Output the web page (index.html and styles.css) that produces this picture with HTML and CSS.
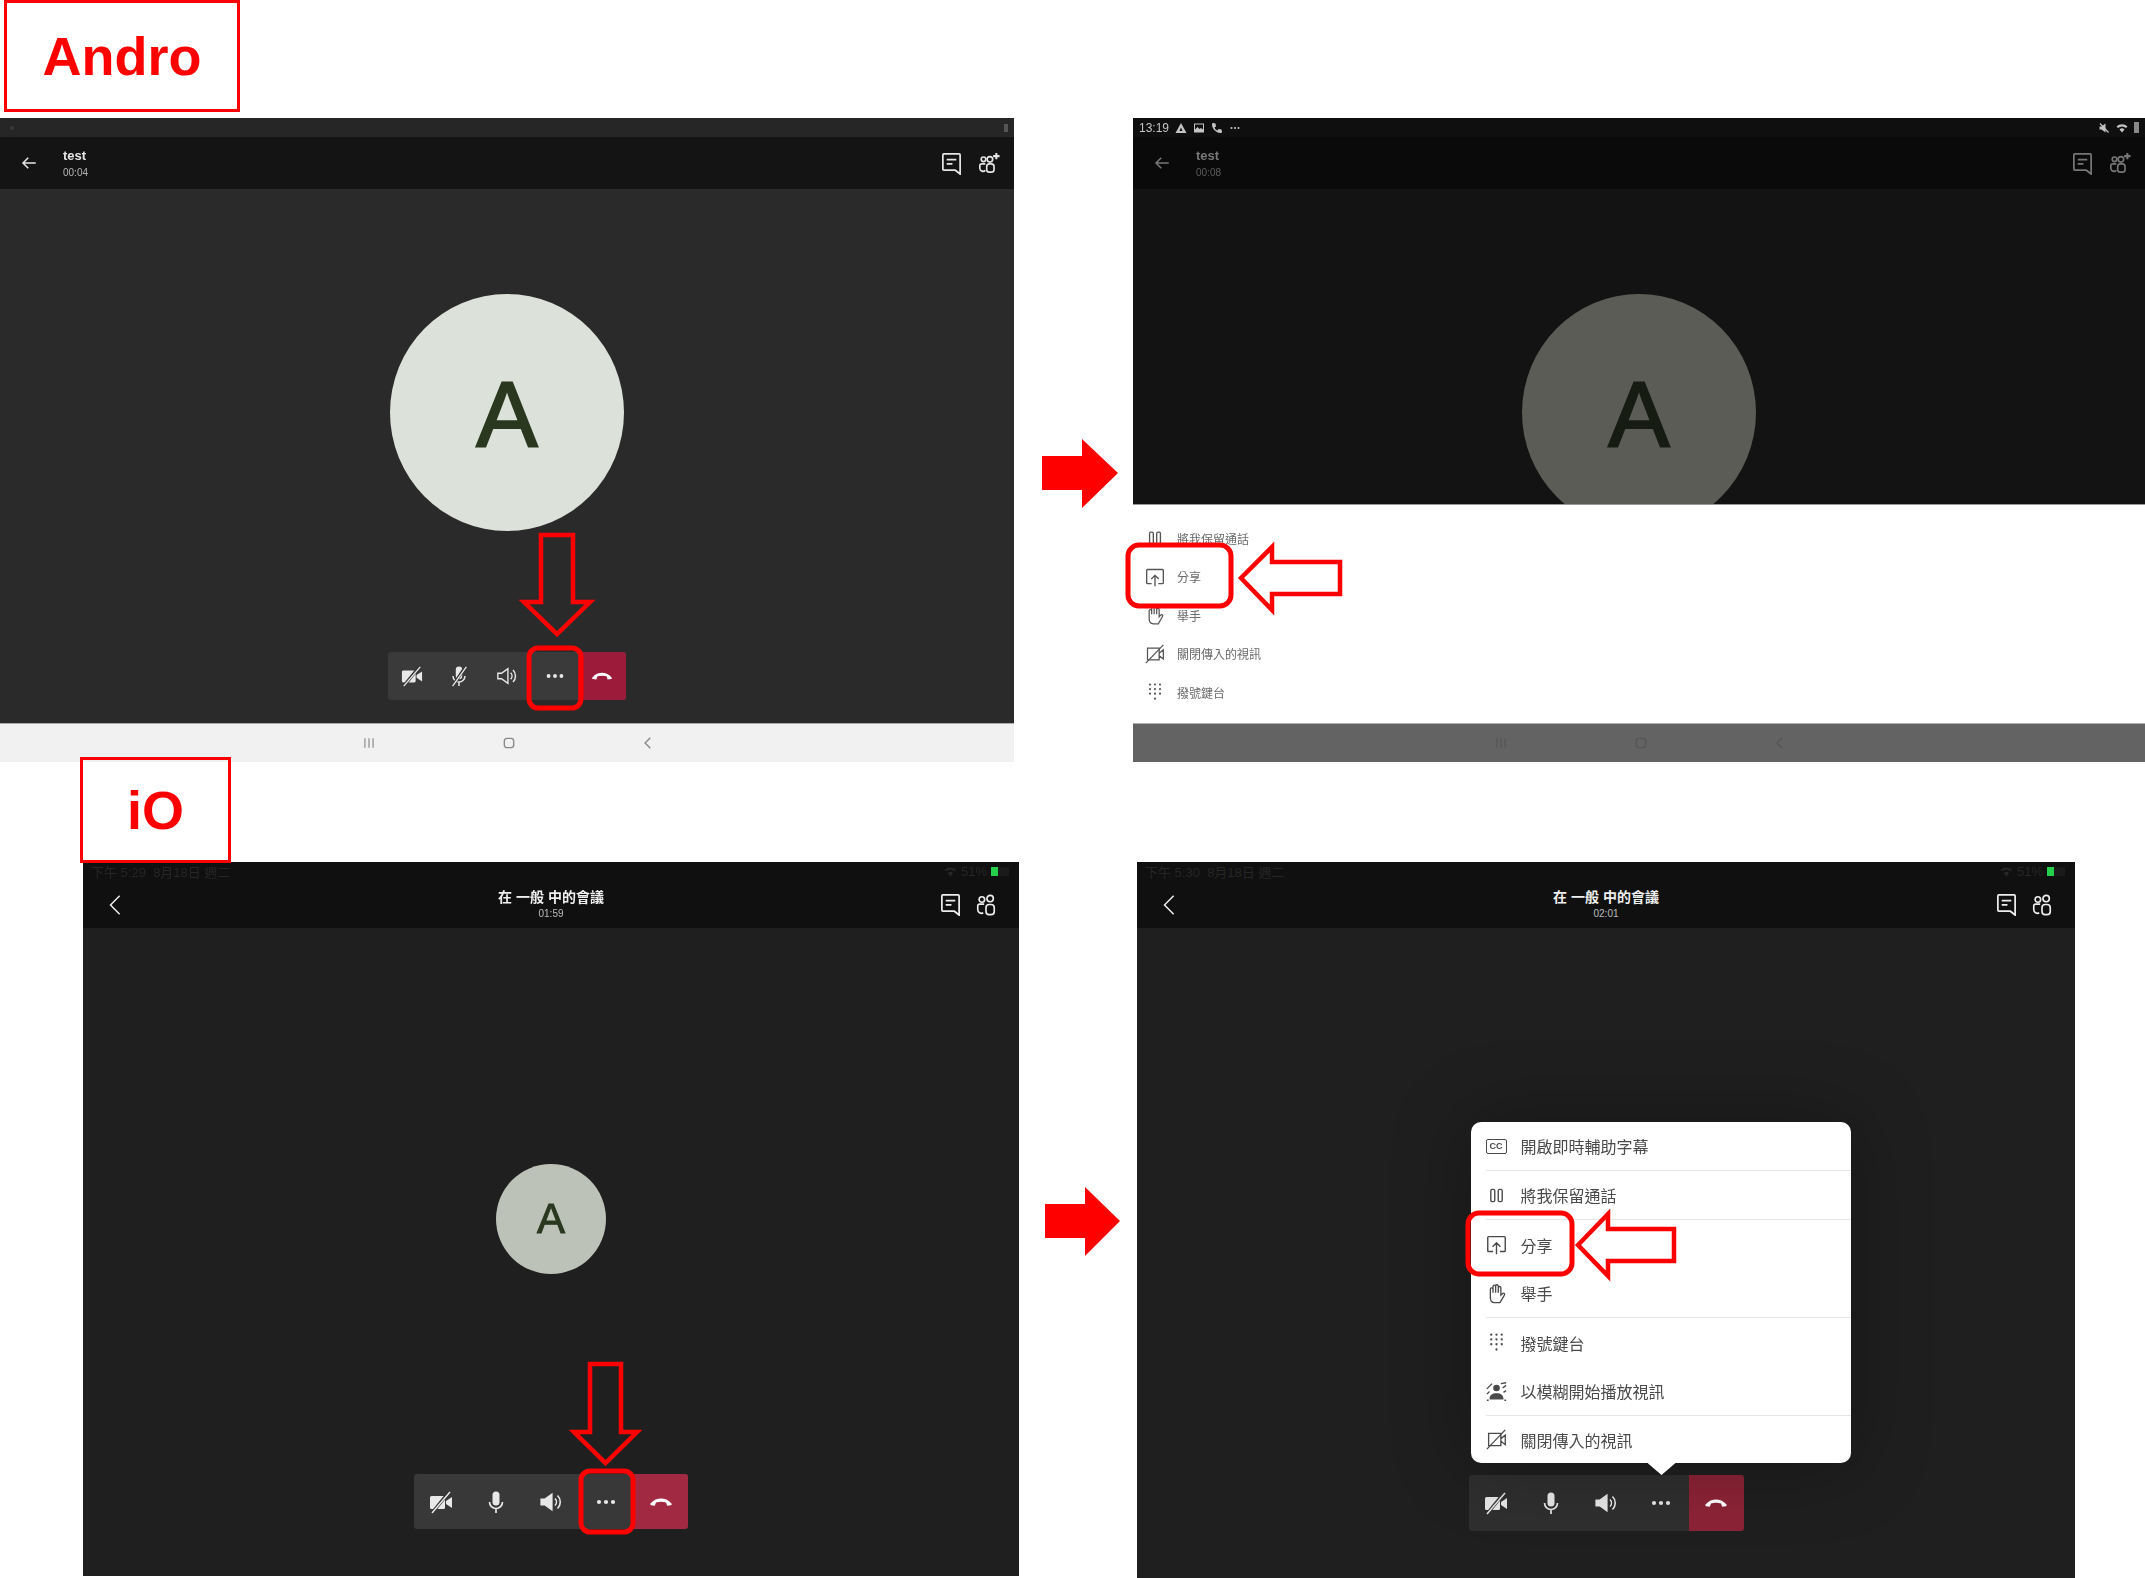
FILE: index.html
```html
<!DOCTYPE html>
<html lang="zh-Hant">
<head>
    <meta charset="UTF-8">
    <title>Teams share steps</title>
    <link rel="stylesheet" href="styles.css">
</head>
<body>

<svg class="defs" width="0" height="0">
    <symbol id="arrow-back" viewBox="0 0 24 24"><path d="M21 12H4M11 5l-7 7 7 7" fill="none" stroke="currentColor" stroke-width="2"/></symbol>
    <symbol id="chevron" viewBox="0 0 24 24"><path d="M16 2L6 12l10 10" fill="none" stroke="currentColor" stroke-width="1.6"/></symbol>
    <symbol id="chat" viewBox="0 0 24 24"><path d="M4 2h16a1 1 0 0 1 1 1v20l-5-4H4a1 1 0 0 1-1-1V3a1 1 0 0 1 1-1z" fill="none" stroke="currentColor" stroke-width="1.8"/><path d="M7 8h10M7 12.500h6" stroke="currentColor" stroke-width="1.8"/></symbol>
    <symbol id="people" viewBox="0 0 24 24"><g fill="none" stroke="currentColor" stroke-width="1.8"><circle cx="7.500" cy="6" r="3"/><circle cx="16.500" cy="5" r="3.500"/><rect x="12" y="11.500" width="9" height="11" rx="3.500"/><path d="M10 11H5a2 2 0 0 0-2 2v4a4 4 0 0 0 6 3.500"/></g></symbol>
    <symbol id="people-add" viewBox="0 0 24 24"><g fill="none" stroke="currentColor" stroke-width="1.8"><circle cx="6" cy="8" r="2.500"/><circle cx="13" cy="8" r="3"/><rect x="9.500" y="13" width="8" height="9" rx="3"/><path d="M8 13H4a2 2 0 0 0-2 2v3a3.500 3.500 0 0 0 6 2"/><path d="M20 1v7M16.500 4.500h7" stroke-width="2.200"/></g></symbol>
    <symbol id="video-off" viewBox="0 0 24 24"><rect x="1" y="6" width="15" height="13" rx="1.500" fill="currentColor"/><path d="M17 11l6-4v11l-6-4z" fill="currentColor"/><path d="M20 2L3 23" stroke="var(--cut)" stroke-width="3.400"/><path d="M21 2L3 23" stroke="currentColor" stroke-width="1.500"/></symbol>
    <symbol id="mic" viewBox="0 0 24 24"><rect x="8.500" y="1.500" width="7" height="14" rx="3.500" fill="currentColor"/><path d="M5.500 12a6.500 6.500 0 0 0 13 0M12 18.500V23" fill="none" stroke="currentColor" stroke-width="1.700"/></symbol>
    <symbol id="mic-off" viewBox="0 0 24 24"><rect x="8.500" y="1.500" width="7" height="14" rx="3.500" fill="currentColor"/><path d="M5.500 12a6.500 6.500 0 0 0 13 0M12 18.500V23" fill="none" stroke="currentColor" stroke-width="1.600"/><path d="M19 2L5 23" stroke="var(--cut)" stroke-width="3.400"/><path d="M20 2L5 23" stroke="currentColor" stroke-width="1.500"/></symbol>
    <symbol id="speaker" viewBox="0 0 24 24"><path d="M2 9h4l7-5v16l-7-5H2z" fill="currentColor" stroke="currentColor" stroke-width="1.200"/><path d="M16 8.500a5 5 0 0 1 0 7M18.500 5.500a9 9 0 0 1 0 13" fill="none" stroke="currentColor" stroke-width="1.600"/></symbol>
    <symbol id="speaker-line" viewBox="0 0 24 24"><path d="M2 9h4l7-5v16l-7-5H2z" fill="none" stroke="currentColor" stroke-width="1.500"/><path d="M16 8.500a5 5 0 0 1 0 7M18.500 5.500a9 9 0 0 1 0 13" fill="none" stroke="currentColor" stroke-width="1.600"/></symbol>
    <symbol id="dots" viewBox="0 0 24 24"><circle cx="5" cy="12" r="2.100" fill="currentColor"/><circle cx="12" cy="12" r="2.100" fill="currentColor"/><circle cx="19" cy="12" r="2.100" fill="currentColor"/></symbol>
    <symbol id="hangup" viewBox="0 0 24 24"><path d="M1.500 13.500C4.500 9.800 8.500 8.500 12 8.500s7.500 1.300 10.500 5c.5.700.1 1.700-.7 1.800l-3.600.5-1.200-3.400c-1.500-.5-3.400-.7-5-.7s-3.500.2-5 .7L5.800 15.800l-3.600-.5c-.8-.1-1.200-1.100-.7-1.800z" fill="currentColor"/></symbol>
    <symbol id="pause" viewBox="0 0 24 24"><g fill="none" stroke="currentColor" stroke-width="1.600"><rect x="5.500" y="5" width="4.500" height="14" rx="1.500"/><rect x="14" y="5" width="4.500" height="14" rx="1.500"/></g></symbol>
    <symbol id="share" viewBox="0 0 24 24"><path d="M8 20H3a1 1 0 0 1-1-1V4a1 1 0 0 1 1-1h18a1 1 0 0 1 1 1v15a1 1 0 0 1-1 1h-5M12 23V10M7.500 14.500L12 10l4.500 4.500" fill="none" stroke="currentColor" stroke-width="1.600"/></symbol>
    <symbol id="hand" viewBox="0 0 24 24"><path d="M5 14V7a1.500 1.500 0 0 1 3 0v4V4a1.500 1.500 0 0 1 3 0v7V3.500a1.500 1.500 0 0 1 3 0V11V5.500a1.500 1.500 0 0 1 3 0V14l2-2c1.500-1 3 .3 2 1.800L16 22.500H10c-3 0-5-2.500-5-6z" fill="none" stroke="currentColor" stroke-width="1.500"/></symbol>
    <symbol id="dialpad" viewBox="0 0 24 24"><g fill="currentColor"><circle cx="6" cy="3" r="1.300"/><circle cx="12" cy="3" r="1.300"/><circle cx="18" cy="3" r="1.300"/><circle cx="6" cy="8.500" r="1.300"/><circle cx="12" cy="8.500" r="1.300"/><circle cx="18" cy="8.500" r="1.300"/><circle cx="6" cy="14" r="1.300"/><circle cx="12" cy="14" r="1.300"/><circle cx="18" cy="14" r="1.300"/><circle cx="12" cy="20" r="1.300"/></g></symbol>
    <symbol id="blur" viewBox="0 0 24 24"><circle cx="12" cy="8" r="3.800" fill="currentColor"/><path d="M4 21c0-5 3-7 8-7s8 2 8 7z" fill="currentColor"/><path d="M1 9l6-6M1 15l3-3M17 3l6-1M19 8l4-3M20 13l3-2M1 22h2M21 22h2" stroke="currentColor" stroke-width="1.500"/></symbol>
    <symbol id="video-line" viewBox="0 0 24 24"><path d="M3 5h14v14H3zM17 11l5-4v11l-5-4" fill="none" stroke="currentColor" stroke-width="1.500"/><path d="M22 1L1 23" stroke="currentColor" stroke-width="1.500"/></symbol>
    <symbol id="nav-lines" viewBox="0 0 24 24"><path d="M5 4v16M12 4v16M19 4v16" stroke="currentColor" stroke-width="2"/></symbol>
    <symbol id="nav-home" viewBox="0 0 24 24"><rect x="4" y="4" width="16" height="16" rx="4.500" fill="none" stroke="currentColor" stroke-width="2.400"/></symbol>
    <symbol id="nav-back" viewBox="0 0 24 24"><path d="M16 3l-9 9 9 9" fill="none" stroke="currentColor" stroke-width="2.400"/></symbol>
    <symbol id="warn" viewBox="0 0 24 24"><path d="M12 2L23 22H1zM12 11L9 18h6z" fill="currentColor" fill-rule="evenodd"/></symbol>
    <symbol id="picture" viewBox="0 0 24 24"><path d="M2 3h20v18H2zM4 15l5-5 4 4 3-2 4 3V5H4z" fill="currentColor" fill-rule="evenodd"/></symbol>
    <symbol id="phone" viewBox="0 0 24 24"><path d="M5 2l4 1 1 6-3 2c1 3 3 5 6 6l2-3 6 1 1 4c0 2-1 3-3 3C10 22 2 13 2 5c0-2 1-3 3-3z" fill="currentColor"/></symbol>
    <symbol id="mute" viewBox="0 0 24 24"><path d="M3 9h4l8-6v18l-8-6H3z" fill="currentColor"/><path d="M4 3l17 18" stroke="currentColor" stroke-width="2.500"/></symbol>
    <symbol id="wifi" viewBox="0 0 24 24"><path d="M1 9a16 16 0 0 1 22 0l-3 3a12 12 0 0 0-16 0zM7 15a7 7 0 0 1 10 0l-5 6z" fill="currentColor"/></symbol>
</svg>

<div class="label-row">
    <div class="label label-andro">Andro</div>
</div>

<div class="screen-row">
    <section class="screen screen-andro">
        <div class="status status-plain">
            <span class="status-dot"></span>
            <span class="status-block"></span>
        </div>
        <header class="call-head">
            <svg class="icon back"><use href="#arrow-back"/></svg>
            <div class="call-title">
                <div class="title-name">test</div>
                <div class="title-time">00:04</div>
            </div>
            <div class="head-icons">
                <svg class="icon head-chat"><use href="#chat"/></svg>
                <svg class="icon head-people"><use href="#people-add"/></svg>
            </div>
        </header>
        <div class="call-body">
            <div class="avatar avatar-large">A</div>
            <div class="bar bar-andro">
                <div class="bar-btn"><svg class="icon"><use href="#video-off"/></svg></div>
                <div class="bar-btn"><svg class="icon"><use href="#mic-off"/></svg></div>
                <div class="bar-btn"><svg class="icon"><use href="#speaker-line"/></svg></div>
                <div class="bar-btn"><svg class="icon"><use href="#dots"/></svg></div>
                <div class="bar-btn hang"><svg class="icon"><use href="#hangup"/></svg></div>
            </div>
        </div>
        <nav class="nav-keys">
            <div class="nav-key"><svg class="icon"><use href="#nav-lines"/></svg></div>
            <div class="nav-key"><svg class="icon"><use href="#nav-home"/></svg></div>
            <div class="nav-key"><svg class="icon"><use href="#nav-back"/></svg></div>
        </nav>
    </section>

    <section class="screen screen-sheet">
        <div class="status status-phone">
            <div class="status-left">
                <span>13:19</span>
                <svg class="icon"><use href="#warn"/></svg>
                <svg class="icon"><use href="#picture"/></svg>
                <svg class="icon"><use href="#phone"/></svg>
                <svg class="icon"><use href="#dots"/></svg>
            </div>
            <div class="status-right">
                <svg class="icon"><use href="#mute"/></svg>
                <svg class="icon"><use href="#wifi"/></svg>
                <span class="status-batt"></span>
            </div>
        </div>
        <header class="call-head">
            <svg class="icon back"><use href="#arrow-back"/></svg>
            <div class="call-title">
                <div class="title-name">test</div>
                <div class="title-time">00:08</div>
            </div>
            <div class="head-icons">
                <svg class="icon head-chat"><use href="#chat"/></svg>
                <svg class="icon head-people"><use href="#people-add"/></svg>
            </div>
        </header>
        <div class="call-body">
            <div class="avatar avatar-large">A</div>
        </div>
        <div class="sheet">
            <div class="sheet-row"><svg class="icon"><use href="#pause"/></svg>將我保留通話</div>
            <div class="sheet-row"><svg class="icon"><use href="#share"/></svg>分享</div>
            <div class="sheet-row"><svg class="icon"><use href="#hand"/></svg>舉手</div>
            <div class="sheet-row"><svg class="icon"><use href="#video-line"/></svg>關閉傳入的視訊</div>
            <div class="sheet-row"><svg class="icon"><use href="#dialpad"/></svg>撥號鍵台</div>
        </div>
        <nav class="nav-keys">
            <div class="nav-key"><svg class="icon"><use href="#nav-lines"/></svg></div>
            <div class="nav-key"><svg class="icon"><use href="#nav-home"/></svg></div>
            <div class="nav-key"><svg class="icon"><use href="#nav-back"/></svg></div>
        </nav>
    </section>
</div>

<div class="label-row label-row-ios">
    <div class="label label-ios">iO</div>
</div>

<div class="screen-row screen-row-ios">
    <section class="screen screen-ios screen-ios-left">
        <div class="status status-tablet">
            <span>下午 5:29&nbsp;&nbsp;8月18日 週二</span>
            <div class="status-right">
                <svg class="icon"><use href="#wifi"/></svg>
                <span>51%</span>
                <span class="status-green"></span>
            </div>
        </div>
        <header class="call-head">
            <svg class="icon back"><use href="#chevron"/></svg>
            <div class="call-title">
                <div class="title-name">在 一般 中的會議</div>
                <div class="title-time">01:59</div>
            </div>
            <div class="head-icons">
                <svg class="icon head-chat"><use href="#chat"/></svg>
                <svg class="icon head-people"><use href="#people"/></svg>
            </div>
        </header>
        <div class="call-body">
            <div class="avatar avatar-small">A</div>
            <div class="bar bar-ios">
                <div class="bar-btn"><svg class="icon"><use href="#video-off"/></svg></div>
                <div class="bar-btn"><svg class="icon"><use href="#mic"/></svg></div>
                <div class="bar-btn"><svg class="icon"><use href="#speaker"/></svg></div>
                <div class="bar-btn"><svg class="icon"><use href="#dots"/></svg></div>
                <div class="bar-btn hang"><svg class="icon"><use href="#hangup"/></svg></div>
            </div>
        </div>
    </section>

    <section class="screen screen-ios screen-ios-right">
        <div class="status status-tablet">
            <span>下午 5:30&nbsp;&nbsp;8月18日 週二</span>
            <div class="status-right">
                <svg class="icon"><use href="#wifi"/></svg>
                <span>51%</span>
                <span class="status-green"></span>
            </div>
        </div>
        <header class="call-head">
            <svg class="icon back"><use href="#chevron"/></svg>
            <div class="call-title">
                <div class="title-name">在 一般 中的會議</div>
                <div class="title-time">02:01</div>
            </div>
            <div class="head-icons">
                <svg class="icon head-chat"><use href="#chat"/></svg>
                <svg class="icon head-people"><use href="#people"/></svg>
            </div>
        </header>
        <div class="call-body">
            <div class="bar bar-ios bar-popup">
                <div class="menu">
                    <div class="menu-row line"><span class="cc-icon">CC</span>開啟即時輔助字幕</div>
                    <div class="menu-row line"><svg class="icon"><use href="#pause"/></svg>將我保留通話</div>
                    <div class="menu-row"><svg class="icon"><use href="#share"/></svg>分享</div>
                    <div class="menu-row line"><svg class="icon"><use href="#hand"/></svg>舉手</div>
                    <div class="menu-row"><svg class="icon"><use href="#dialpad"/></svg>撥號鍵台</div>
                    <div class="menu-row line"><svg class="icon"><use href="#blur"/></svg>以模糊開始播放視訊</div>
                    <div class="menu-row"><svg class="icon"><use href="#video-line"/></svg>關閉傳入的視訊</div>
                </div>
                <div class="bar-btn"><svg class="icon"><use href="#video-off"/></svg></div>
                <div class="bar-btn"><svg class="icon"><use href="#mic"/></svg></div>
                <div class="bar-btn"><svg class="icon"><use href="#speaker"/></svg></div>
                <div class="bar-btn"><svg class="icon"><use href="#dots"/></svg></div>
                <div class="bar-btn hang"><svg class="icon"><use href="#hangup"/></svg></div>
            </div>
        </div>
    </section>
</div>

<!-- red callouts drawn over the screenshots -->
<svg class="callouts" viewBox="0 0 2145 1578">
    <path class="fat-arrow" d="M1042 456H1082V439L1118 473L1082 508V490H1042Z"/>
    <path class="fat-arrow" d="M1045 1204H1085V1187L1120 1221L1085 1256V1238H1045Z"/>

    <path d="M541 535H573V602H590L557 634L524 602H541Z"/>
    <rect class="ring" x="529" y="648" width="52" height="60" rx="9"/>

    <path d="M1241 578L1272 547V562H1340V594H1272V610Z"/>
    <rect class="ring" x="1128" y="545" width="103" height="61" rx="11"/>

    <path d="M590 1364H621V1432H637L605.500 1463L574 1432H590Z"/>
    <rect class="ring" x="581" y="1471" width="52" height="61" rx="9"/>

    <path d="M1578 1245L1608 1214V1229H1674V1261H1608V1276Z"/>
    <rect class="ring" x="1468" y="1213" width="104" height="61" rx="11"/>
</svg>

</body>
</html>
```

FILE: styles.css
```css
html, body {
    margin: 0;
    padding: 0;
    background: white;
}
body {
    position: relative;
    width: 2145px;
    height: 1578px;
    overflow: hidden;
    font-family: "Liberation Sans", "Noto Sans CJK TC", sans-serif;
}
.defs {
    display: block;
    height: 0;
}
.icon {
    display: block;
    flex: none;
    width: 24px;
    height: 24px;
}

/* labels */
.label-row {
    height: 118px;
    padding-left: 4px;
    box-sizing: border-box;
}
.label {
    box-sizing: border-box;
    display: flex;
    align-items: center;
    justify-content: center;
    border: 3px solid #ff0000;
    color: #ff0000;
    font-weight: bold;
    font-size: 54px;
}
.label-andro {
    width: 236px;
    height: 112px;
}
.label-row-ios {
    display: flow-root;
    height: 100px;
    padding-left: 80px;
}
.label-ios {
    position: relative;
    z-index: 1;
    width: 151px;
    height: 106px;
    margin-top: -5px;
}

/* screens */
.screen-row {
    display: flex;
    gap: 119px;
    height: 644px;
}
.screen-row-ios {
    gap: 118px;
    height: 716px;
    padding-left: 83px;
}
.screen {
    display: flex;
    flex-direction: column;
    filter: blur(0.6px);
    --cut: #333;
}
.screen-andro {
    width: 1014px;
    background: #2a2a2a;
    color: #e6e6e6;
}
.screen-sheet {
    width: 1012px;
    background: #131313;
    color: #777;
}
.screen-ios {
    background: #1f1f1f;
    color: #eee;
}
.screen-ios-left {
    width: 936px;
    height: 714px;
}
.screen-ios-right {
    width: 938px;
}

/* status bars */
.status {
    flex: none;
    height: 19px;
    display: flex;
    align-items: center;
    justify-content: space-between;
    box-sizing: border-box;
}
.status-plain {
    background: #262626;
    padding: 0 6px 0 10px;
}
.status-dot {
    width: 4px;
    height: 4px;
    border-radius: 50%;
    background: #3a3a3a;
}
.status-block {
    width: 4px;
    height: 8px;
    background: #555;
}
.status-phone {
    background: #0f0f0f;
    color: #c4c4c4;
    font-size: 12px;
    padding: 0 6px;
}
.status-left, .status-right {
    display: flex;
    align-items: center;
    gap: 6px;
}
.status-phone .icon {
    width: 12px;
    height: 12px;
}
.status-batt {
    width: 5px;
    height: 11px;
    background: #888;
}
.status-tablet {
    background: #101010;
    color: #262626;
    font-size: 13px;
    padding: 0 10px 0 8px;
}
.status-tablet .icon {
    width: 13px;
    height: 13px;
}
.status-tablet .status-right {
    gap: 4px;
}
.status-green {
    width: 18px;
    height: 9px;
    box-sizing: border-box;
    background: #25d04a;
    border-right: 11px solid #1a1a1a;
}

/* call header */
.call-head {
    flex: none;
    height: 52px;
    display: flex;
    align-items: center;
    background: #141414;
    padding: 0 14px 0 20px;
}
.screen-sheet .call-head {
    background: #0a0a0a;
}
.back {
    width: 18px;
    height: 18px;
}
.call-title {
    margin-left: 25px;
    margin-right: auto;
}
.title-name {
    font-size: 13px;
    font-weight: bold;
    line-height: 17px;
}
.title-time {
    font-size: 10px;
    line-height: 14px;
    margin-top: 2px;
    opacity: 0.75;
}
.head-icons {
    display: flex;
    align-items: center;
    gap: 15px;
}
.head-chat {
    width: 23px;
    height: 23px;
}
.head-people {
    width: 22px;
    height: 22px;
}
.screen-ios .call-head {
    height: 47px;
    display: grid;
    grid-template-columns: 1fr auto 1fr;
    background: #101010;
    padding: 0 22px;
}
.screen-ios .back {
    width: 22px;
    height: 22px;
}
.screen-ios .call-title {
    margin: 0;
    text-align: center;
}
.screen-ios .title-name {
    font-size: 14px;
    line-height: 19px;
}
.screen-ios .title-time {
    margin-top: 0;
}
.screen-ios .head-icons {
    justify-self: end;
    gap: 13px;
}

/* call area */
.call-body {
    flex: 1;
    min-height: 0;
    overflow: hidden;
    display: flex;
    flex-direction: column;
    align-items: center;
}
.screen-andro .call-body,
.screen-sheet .call-body {
    padding-top: 105px;
}
.screen-ios-left .call-body {
    padding-top: 236px;
}
.screen-ios-right .call-body {
    padding-top: 547px;
    overflow: visible;
}
.avatar {
    flex: none;
    display: flex;
    align-items: center;
    justify-content: center;
    border-radius: 50%;
}
.avatar-large {
    width: 234px;
    height: 237px;
    box-sizing: border-box;
    padding-top: 6px;
    font-size: 92px;
    -webkit-text-stroke: 2px currentColor;
    background: #dce1d9;
    color: #2a3820;
}
.screen-sheet .avatar-large {
    background: #5a5c55;
    color: #171c12;
}
.avatar-small {
    width: 110px;
    height: 110px;
    font-size: 42px;
    -webkit-text-stroke: 1px currentColor;
    background: #bcc2b7;
    color: #2a3820;
}

/* call controls */
.bar {
    flex: none;
    display: flex;
    border-radius: 3px;
    background: #3a3a3a;
    color: #e8e8e8;
}
.bar-andro {
    width: 238px;
    height: 48px;
    margin-top: 121px;
}
.bar-andro .icon {
    width: 22px;
    height: 22px;
}
.bar-ios {
    width: 274px;
    height: 55px;
    margin-top: 200px;
    background: #383838;
}
.bar-popup {
    position: relative;
    width: 275px;
    height: 56px;
    margin-top: 0;
    background: #2f2f2f;
}
.bar-btn {
    flex: 1;
    display: flex;
    align-items: center;
    justify-content: center;
}
.hang {
    background: #9c1a3a;
    border-radius: 0 3px 3px 0;
    color: white;
}
.bar-ios .hang {
    background: #a12a42;
}
.bar-popup .hang {
    background: #8c2336;
}

/* android bottom sheet */
.sheet {
    flex: none;
    height: 219px;
    box-sizing: border-box;
    padding-top: 14px;
    background: white;
    border-top: 1px solid #999;
    color: #6a6a6a;
    font-size: 12px;
}
.sheet-row {
    display: flex;
    align-items: center;
    gap: 12px;
    height: 38.500px;
    padding-left: 12px;
}
.sheet-row .icon {
    width: 20px;
    height: 20px;
    color: #555;
}

/* ios popup menu */
.menu {
    position: absolute;
    left: 2px;
    bottom: 100%;
    margin-bottom: 12px;
    width: 380px;
    box-sizing: border-box;
    padding-left: 15px;
    background: white;
    border-radius: 10px;
    box-shadow: 0 0 80px rgba(0, 0, 0, 0.3);
    color: #4a4a4a;
    font-size: 16px;
}
.menu::after {
    content: "";
    position: absolute;
    left: 177px;
    top: 100%;
    width: 28px;
    height: 12px;
    background: white;
    clip-path: polygon(0 0, 100% 0, 50% 100%);
}
.menu-row {
    display: flex;
    align-items: center;
    gap: 14px;
    height: 49px;
    box-sizing: border-box;
}
.menu-row:last-child {
    height: 47px;
}
.menu-row.line {
    border-bottom: 1px solid #e6e6e6;
}
.menu-row .icon {
    width: 21px;
    height: 21px;
}
.cc-icon {
    flex: none;
    box-sizing: border-box;
    width: 21px;
    height: 15px;
    border: 1.500px solid currentColor;
    border-radius: 2px;
    font-size: 9px;
    font-weight: bold;
    line-height: 12px;
    text-align: center;
}

/* android nav keys */
.nav-keys {
    flex: none;
    height: 39px;
    display: flex;
    align-items: center;
    justify-content: center;
    box-sizing: border-box;
    padding-left: 3px;
    background: #f1f1f1;
    border-top: 1px solid #aaa;
    color: #8a8a8a;
}
.screen-sheet .nav-keys {
    background: #636363;
    border-top-color: #b0b0b0;
    color: #555;
}
.nav-key {
    width: 139.500px;
    display: flex;
    justify-content: center;
}
.nav-key .icon {
    width: 14px;
    height: 14px;
}

/* red callouts */
.callouts {
    position: absolute;
    left: 0;
    top: 0;
    z-index: 2;
    width: 2145px;
    height: 1578px;
    fill: none;
    stroke: #ff0000;
    stroke-width: 4.500;
}
.callouts .ring {
    stroke-width: 5;
}
.fat-arrow {
    fill: #ff0000;
    stroke: none;
}
```
